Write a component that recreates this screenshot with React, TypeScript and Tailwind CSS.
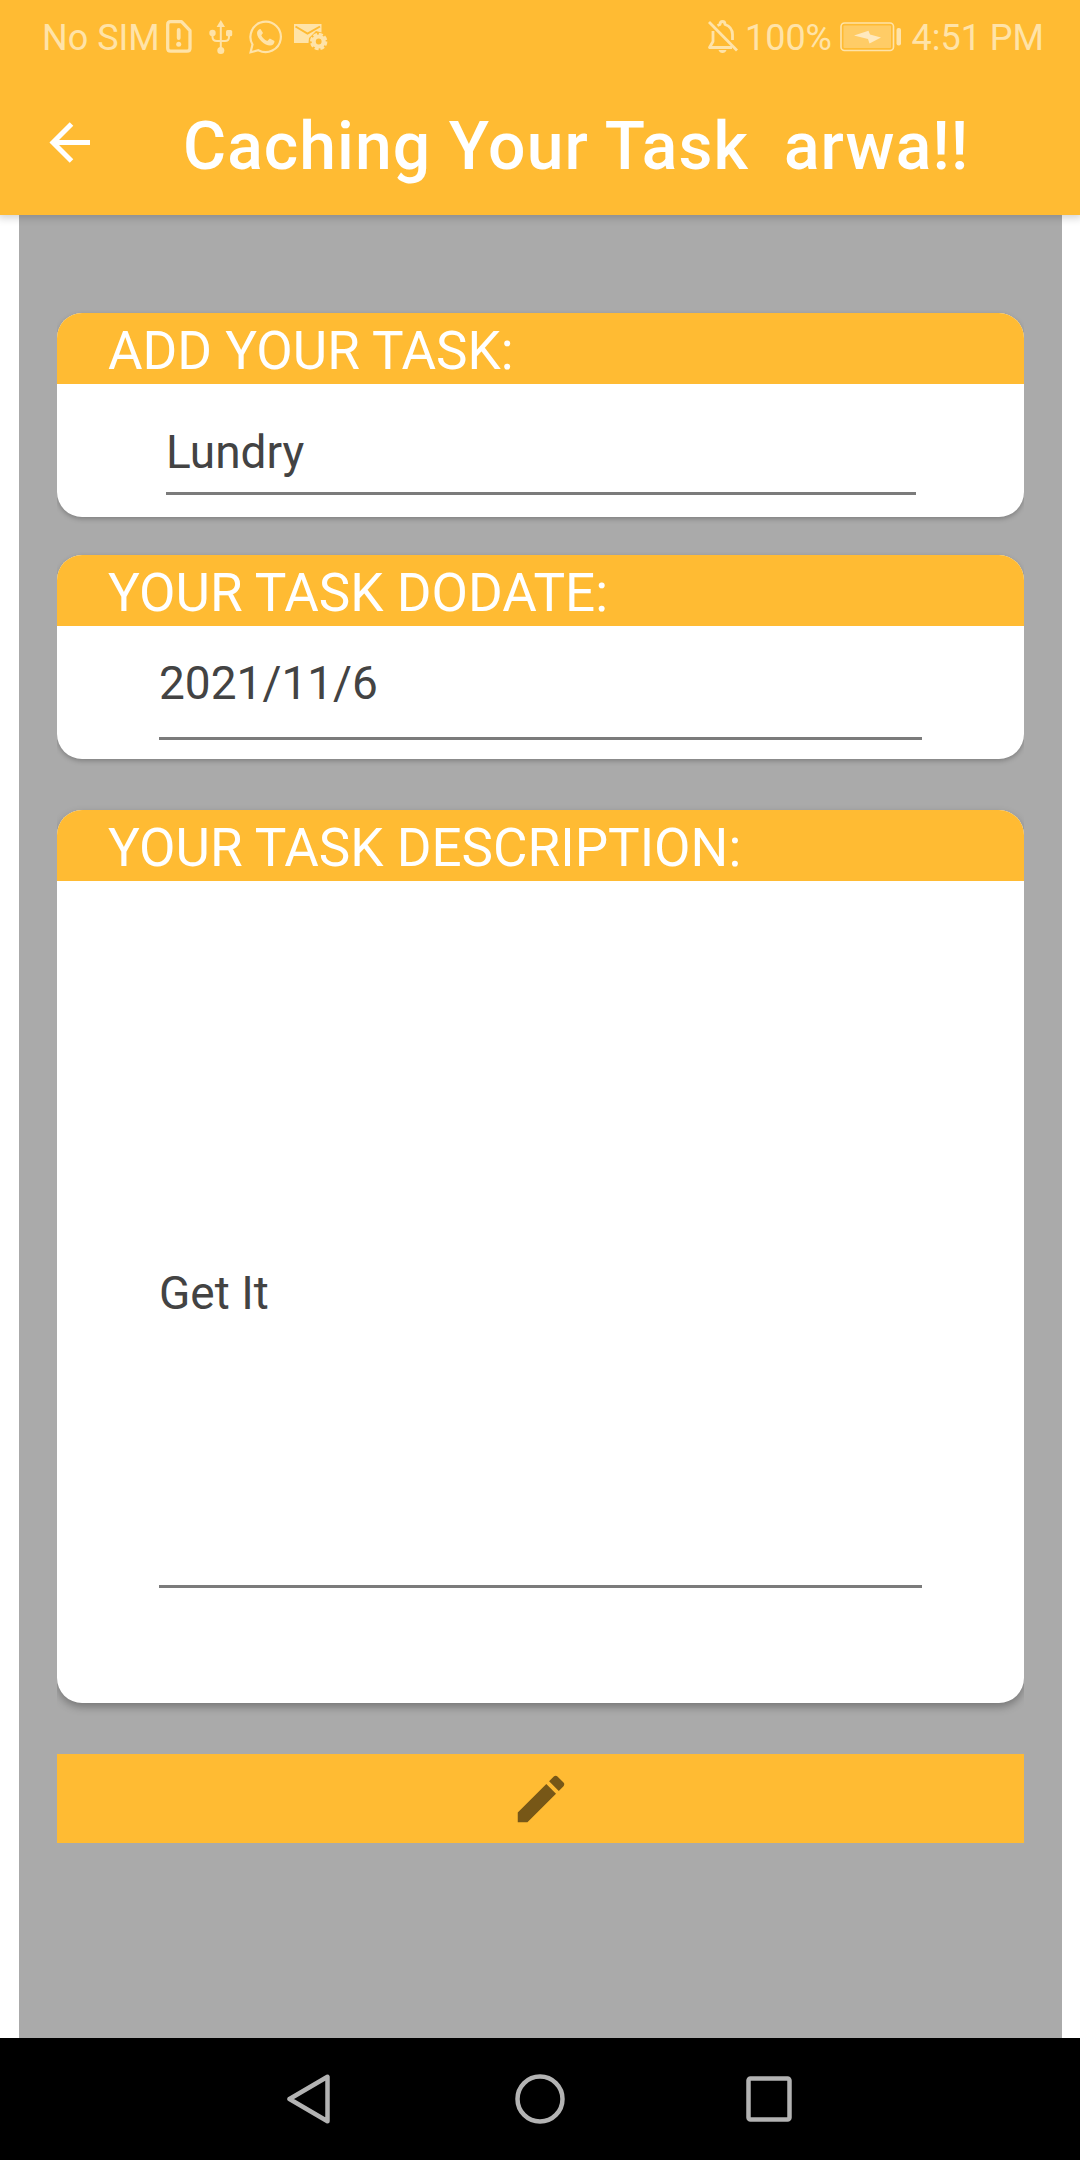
import React, { ReactNode } from "react";

function SimIcon() {
  return (
    <svg width="28" height="36" viewBox="0 0 28 36" fill="none" stroke="currentColor" className="shrink-0">
      <path d="M5.7 2.700H16.5L25 11.700V29.200Q25 32.200 22 32.200H5.700Q2.700 32.200 2.700 29.200V5.700Q2.700 2.700 5.700 2.700Z" strokeWidth="3.300" strokeLinejoin="round" />
      <path d="M13.700 11V19" strokeWidth="3.800" strokeLinecap="round" />
      <circle cx="13.700" cy="25.300" r="2.500" fill="currentColor" stroke="none" />
    </svg>
  );
}

function UsbIcon() {
  return (
    <svg width="24" height="36" viewBox="0 0 24 36" fill="none" stroke="currentColor" strokeWidth="2" className="shrink-0">
      <path d="M11.800 6V32M3.500 14V18Q3.500 22 8 22H16Q20 22 20 18V14" />
      <path d="M11.800 1L16 8H7.600Z" fill="currentColor" stroke="none" />
      <circle cx="3.500" cy="14" r="3.200" fill="currentColor" stroke="none" />
      <rect x="17" y="11" width="6.200" height="6.200" rx="1.500" fill="currentColor" stroke="none" />
      <circle cx="11.800" cy="31.500" r="3.500" fill="currentColor" stroke="none" />
    </svg>
  );
}

function WhatsAppIcon() {
  return (
    <svg width="34" height="34" viewBox="0 0 34 34" fill="none" stroke="currentColor" className="shrink-0">
      <path d="M1.600 32.300L3.500 24.500A15.200 15.200 0 1 1 9.300 30.200Z" strokeWidth="2.200" />
      <path d="M11.500 9C10 9 8 11 8 13C8 19 16 25.500 21 25.500C24 25.500 25.500 23.500 25.500 21L20.800 18.500L18.300 21C15.500 20 13.200 17.500 12.300 15.300L14 13Z" fill="currentColor" stroke="none" />
    </svg>
  );
}

function MailGearIcon() {
  return (
    <svg width="36" height="30" viewBox="0 0 36 30" className="shrink-0">
      <path d="M1 1H28.500V9.500L23 8L16 15L15.500 20H1Z" fill="currentColor" />
      <path d="M2.500 3.500L14.500 10.500L27 3.500" stroke="#FFBB33" strokeWidth="2" fill="none" />
      <circle cx="25.700" cy="18.500" r="5" fill="none" stroke="currentColor" strokeWidth="4.200" />
      <circle cx="25.700" cy="18.500" r="7.400" fill="none" stroke="currentColor" strokeWidth="2.600" strokeDasharray="4 1.810" />
    </svg>
  );
}

function BellOffIcon() {
  return (
    <svg width="32" height="36" viewBox="0 0 32 36" fill="none" stroke="currentColor" strokeWidth="2.800" className="shrink-0">
      <path d="M2 3L30 31.500" />
      <path d="M6 12V22.500L2.500 28.500H25M10.500 6.500L13 5.500Q13 2.500 15.500 2.500T18 5.500Q25.500 8 25.500 15.500V21" strokeLinejoin="round" />
      <path d="M11.500 31H19.500Q18.500 34 15.500 34T11.500 31Z" fill="currentColor" stroke="none" />
    </svg>
  );
}

function BatteryIcon() {
  return (
    <svg width="62" height="30" viewBox="0 0 62 30" fill="none" className="shrink-0">
      <rect x="1" y="1" width="52.500" height="27.500" rx="3.500" stroke="currentColor" strokeWidth="1.600" />
      <rect x="3.500" y="3.500" width="47.500" height="22.500" rx="1" fill="#FFCC66" />
      <path d="M14 13.500L28.500 8.800L30 12.500L41 15.500L29.500 21.500L28 17Z" fill="#FFE9BF" />
      <rect x="56.500" y="6" width="4.500" height="17.500" rx="2" fill="currentColor" />
    </svg>
  );
}

function Card({ title, className, children }: { title: string; className: string; children: ReactNode }) {
  return (
    <section className={`flex flex-col rounded-[25px] bg-white [clip-path:inset(-10px_0_-20px_0)] ${className}`}>
      <h2 className="h-[71px] shrink-0 rounded-t-[25px] bg-[#FFBB33] pl-[51px] pt-[5px] text-[53px] leading-[67px] text-white">{title}</h2>
      {children}
    </section>
  );
}

export default function App() {
  return (
    <div className="flex h-[2160px] w-[1080px] flex-col overflow-hidden bg-white font-['Roboto',sans-serif]">
      <header className="relative h-[215px] shrink-0 bg-[#FFBB33] shadow-[0_1px_8px_2px_rgba(0,0,0,0.18)]">
        <div className="flex h-[73px] items-center justify-between pl-[42px] pr-9 text-[36px] leading-[42px] text-[#FFE3A8]">
          <div className="flex items-center">
            <span className="w-[123px] whitespace-nowrap pt-[3px]">No SIM</span>
            <SimIcon />
            <span className="ml-4 flex"><UsbIcon /></span>
            <span className="ml-4 flex"><WhatsAppIcon /></span>
            <span className="ml-[10px] flex pt-0.5"><MailGearIcon /></span>
          </div>
          <div className="flex items-center">
            <span className="flex pt-px"><BellOffIcon /></span>
            <span className="ml-[5.5px] pt-[3px]">100%</span>
            <span className="ml-[8px] flex pt-px"><BatteryIcon /></span>
            <span className="ml-[9.5px] pt-[3px]">4:51 PM</span>
          </div>
        </div>
        <div className="flex h-[142px] items-start pl-[48.5px]">
          <svg width="41" height="41" viewBox="0 0 41 41" fill="none" stroke="white" strokeWidth="5" className="mt-[49px]">
            <path d="M41 20.500H4M22.500 2L4 20.500L22.500 39" />
          </svg>
          <h1 className="ml-[93.5px] mt-[35px] whitespace-pre text-[66px] font-medium leading-[77px] tracking-[1.08px] text-white">{"Caching Your Task  arwa!!"}</h1>
        </div>
      </header>

      <main className="ml-[19px] flex w-[1043px] flex-1 flex-col bg-[#AAAAAA] pl-[38px] pr-[38px] pt-[98px]">
        <Card title="ADD YOUR TASK:" className="h-[204px] shadow-[0_2px_5px_rgba(0,0,0,0.25)]">
          <div className="ml-[109px] mr-[108px] h-[111px] border-b-[3px] border-[#7b7b7b] pt-[41px] text-[46px] leading-[54px] text-[#434343]">Lundry</div>
        </Card>
        <Card title="YOUR TASK DODATE:" className="mt-[38px] h-[204px] shadow-[0_2px_5px_rgba(0,0,0,0.25)]">
          <div className="ml-[102px] mr-[102px] h-[114px] border-b-[3px] border-[#7b7b7b] pt-[30px] text-[46px] leading-[54px] text-[#434343]">2021/11/6</div>
        </Card>
        <Card title="YOUR TASK DESCRIPTION:" className="mt-[51px] h-[893px] shadow-[0_4px_8px_rgba(0,0,0,0.3)]">
          <div className="ml-[102px] mr-[102px] h-[707px] border-b-[3px] border-[#7b7b7b] pt-[385px] text-[46px] leading-[54px] text-[#434343]">Get It</div>
        </Card>
        <button aria-label="Edit task" className="mt-[51px] flex h-[89px] w-full items-center justify-center bg-[#FFBB33]">
          <svg width="62" height="62" viewBox="0 0 24 24" fill="#775717">
            <path d="M3 17.250V21h3.750L17.810 9.940l-3.750-3.750L3 17.250zM20.710 7.040c.39-.39.39-1.020 0-1.410l-2.340-2.340c-.39-.39-1.020-.39-1.410 0l-1.830 1.830 3.750 3.750 1.830-1.830z" />
          </svg>
        </button>
      </main>

      <nav className="flex h-[122px] shrink-0 items-center bg-black pl-[287px]">
        <svg width="44" height="50" viewBox="0 0 44 50" fill="none" stroke="#B3B3B3" strokeWidth="4.500" strokeLinejoin="round"><path d="M40.500 2.800V47.200L2.500 25Z" /></svg>
        <svg width="50" height="50" viewBox="0 0 50 50" fill="none" stroke="#B3B3B3" strokeWidth="4.500" className="ml-[184px]"><circle cx="25" cy="25" r="22.500" /></svg>
        <svg width="46" height="46" viewBox="0 0 46 46" fill="none" stroke="#B3B3B3" strokeWidth="4.500" className="ml-[181px]"><rect x="2.500" y="2.500" width="41" height="41" rx="2" /></svg>
      </nav>
    </div>
  );
}
